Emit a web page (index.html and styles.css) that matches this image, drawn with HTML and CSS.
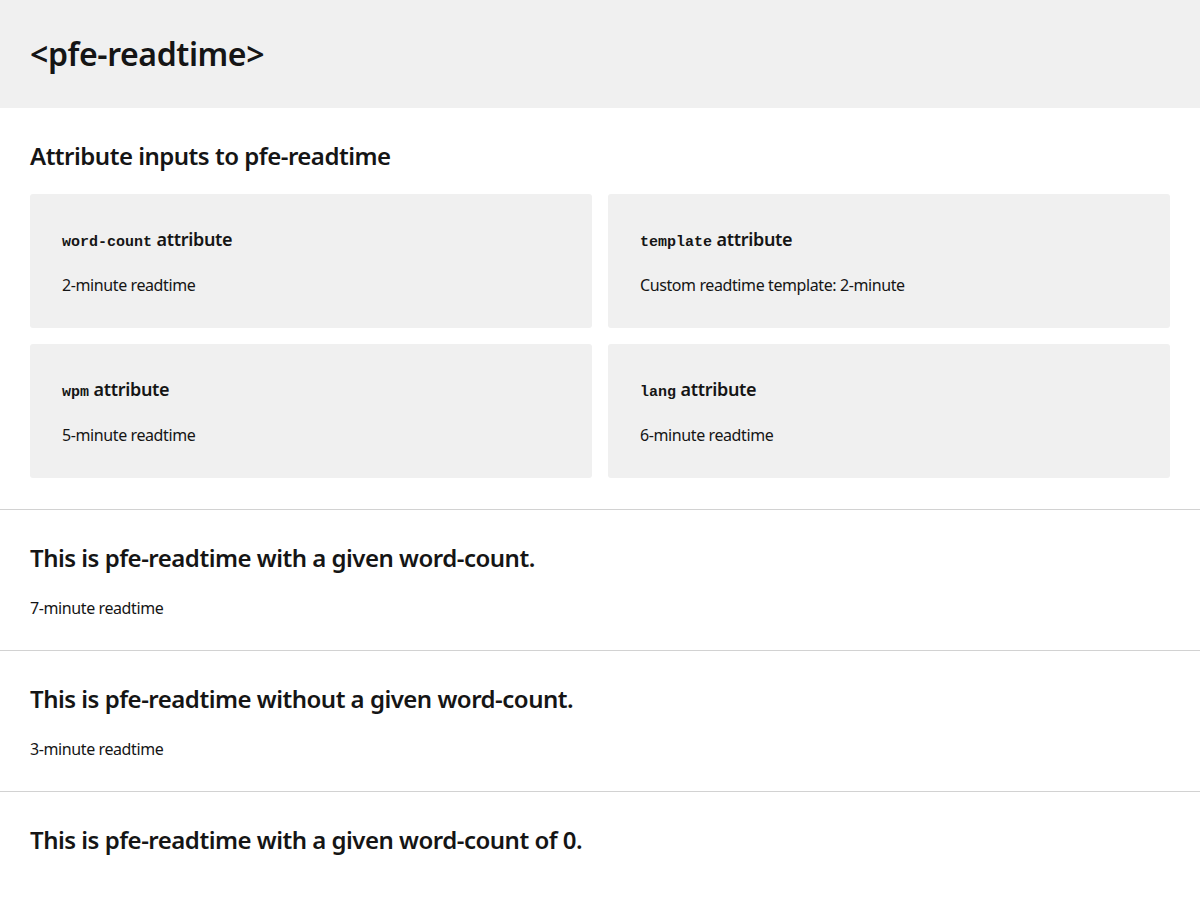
FILE: index.html
```html
<!DOCTYPE html>
<html>
<head>
<meta charset="utf-8">
<link rel="stylesheet" href="styles.css">
</head>
<body>
<header class="page-header">
  <h1 class="page-title">&lt;pfe-readtime&gt;</h1>
</header>
<section class="band">
  <h2 class="band-title">Attribute inputs to pfe-readtime</h2>
  <div class="card-grid">
    <div class="card">
      <h3 class="card-title"><code class="attr">word-count</code> attribute</h3>
      <p class="readtime">2-minute readtime</p>
    </div>
    <div class="card">
      <h3 class="card-title"><code class="attr">template</code> attribute</h3>
      <p class="readtime">Custom readtime template: 2-minute</p>
    </div>
    <div class="card">
      <h3 class="card-title"><code class="attr">wpm</code> attribute</h3>
      <p class="readtime">5-minute readtime</p>
    </div>
    <div class="card">
      <h3 class="card-title"><code class="attr">lang</code> attribute</h3>
      <p class="readtime">6-minute readtime</p>
    </div>
  </div>
</section>
<section class="band">
  <h2 class="band-title">This is pfe-readtime with a given word-count.</h2>
  <p class="readtime">7-minute readtime</p>
</section>
<section class="band">
  <h2 class="band-title">This is pfe-readtime without a given word-count.</h2>
  <p class="readtime">3-minute readtime</p>
</section>
<section class="band band-last">
  <h2 class="band-title">This is pfe-readtime with a given word-count of 0.</h2>
</section>
</body>
</html>
```
FILE: styles.css
```css
html, body {
  margin: 0;
  padding: 0;
  background: #ffffff;
}
body {
  font-family: "Noto Sans", "Open Sans", sans-serif;
  color: #151515;
}
.page-header {
  background: #f0f0f0;
  height: 108px;
  padding: 0 30px;
  display: flex;
  align-items: center;
  box-sizing: border-box;
}
.page-title {
  margin: 0;
  font-size: 32px;
  font-weight: 600;
  line-height: 1.2;
  letter-spacing: -0.4px;
}
.band {
  padding: 32px 30px 30px;
  border-bottom: 1px solid #d2d2d2;
}
.band-last {
  border-bottom: none;
}
.band-title {
  margin: 0 0 23px;
  font-size: 24px;
  font-weight: 600;
  line-height: 31px;
  letter-spacing: -0.5px;
}
.card-grid {
  display: grid;
  grid-template-columns: 1fr 1fr;
  gap: 16px;
  margin-bottom: 1px;
}
.card {
  background: #f0f0f0;
  border-radius: 3px;
  padding: 32px 32px 31px;
}
.card-title {
  margin: 0 0 20px;
  font-size: 18px;
  font-weight: 600;
  line-height: 27px;
  letter-spacing: -0.3px;
}
.attr {
  font-family: "Liberation Mono", monospace;
  font-weight: 700;
  font-size: 15px;
  line-height: 1;
  letter-spacing: 0;
}
.readtime {
  margin: 0;
  font-size: 16px;
  line-height: 24px;
  letter-spacing: -0.4px;
}
```
